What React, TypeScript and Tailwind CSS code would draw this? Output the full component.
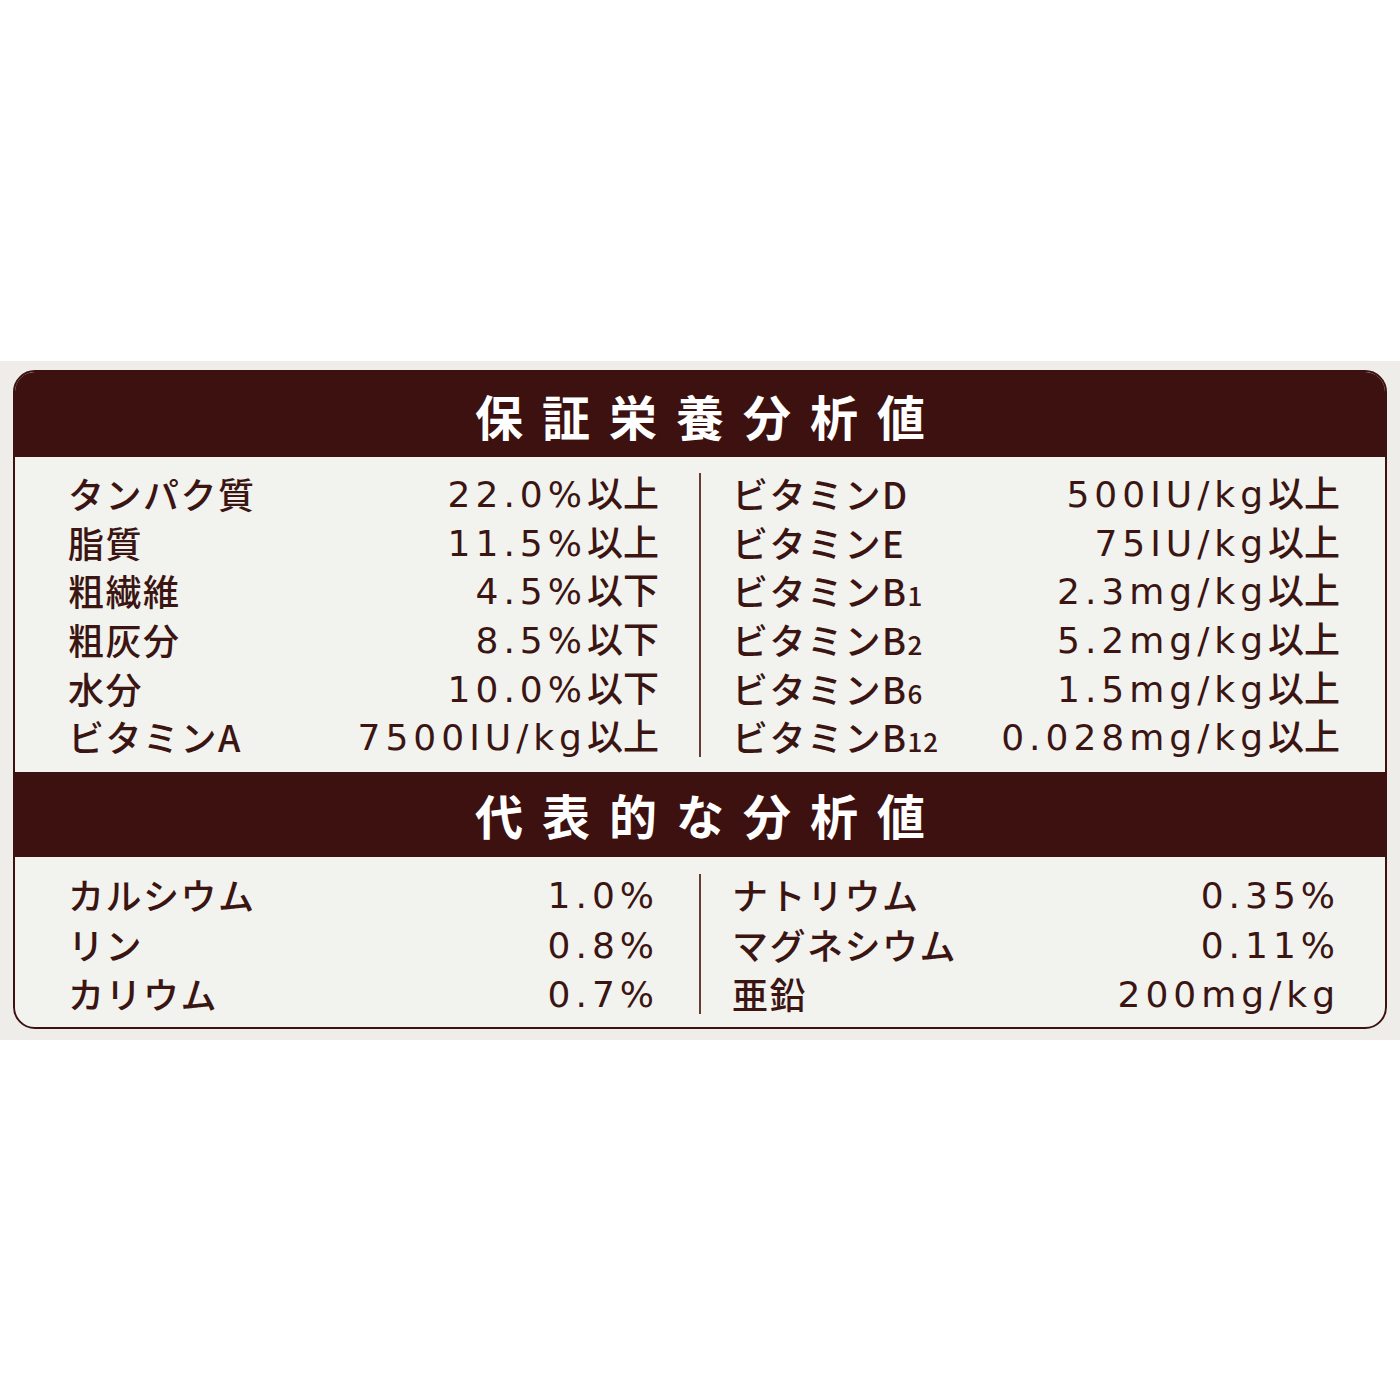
import React from 'react';

type Item = { label: string; sub?: string; num: string; suffix?: string };

const guaranteedLeft: Item[] = [
  { label: 'タンパク質', num: '22.0%', suffix: '以上' },
  { label: '脂質', num: '11.5%', suffix: '以上' },
  { label: '粗繊維', num: '4.5%', suffix: '以下' },
  { label: '粗灰分', num: '8.5%', suffix: '以下' },
  { label: '水分', num: '10.0%', suffix: '以下' },
  { label: 'ビタミンA', num: '7500IU/kg', suffix: '以上' },
];

const guaranteedRight: Item[] = [
  { label: 'ビタミンD', num: '500IU/kg', suffix: '以上' },
  { label: 'ビタミンE', num: '75IU/kg', suffix: '以上' },
  { label: 'ビタミンB', sub: '1', num: '2.3mg/kg', suffix: '以上' },
  { label: 'ビタミンB', sub: '2', num: '5.2mg/kg', suffix: '以上' },
  { label: 'ビタミンB', sub: '6', num: '1.5mg/kg', suffix: '以上' },
  { label: 'ビタミンB', sub: '12', num: '0.028mg/kg', suffix: '以上' },
];

const typicalLeft: Item[] = [
  { label: 'カルシウム', num: '1.0%' },
  { label: 'リン', num: '0.8%' },
  { label: 'カリウム', num: '0.7%' },
];

const typicalRight: Item[] = [
  { label: 'ナトリウム', num: '0.35%' },
  { label: 'マグネシウム', num: '0.11%' },
  { label: '亜鉛', num: '200mg/kg' },
];

function Row({ item, height }: { item: Item; height: string }) {
  return (
    <div className={`flex items-center justify-between ${height}`}>
      <span className="tracking-[1.5px]">
        {item.label}
        {item.sub && <span className="text-[26px] tracking-[1px]">{item.sub}</span>}
      </span>
      <span className="whitespace-nowrap">
        <span className="font-['DejaVu_Sans',sans-serif] tracking-[5px]">{item.num}</span>
        {item.suffix && <span>{item.suffix}</span>}
      </span>
    </div>
  );
}

function Band({ title }: { title: string }) {
  return (
    <div className="h-[85px] bg-[#3c1110] flex items-center justify-center">
      <h2 className="text-white text-[48px] font-bold tracking-[19px] pl-[19px] leading-none">{title}</h2>
    </div>
  );
}

function Section({
  left,
  right,
  rowH,
  pad,
}: {
  left: Item[];
  right: Item[];
  rowH: string;
  pad: string;
}) {
  return (
    <div className={`grid grid-cols-[1fr_2px_1fr] ${pad}`}>
      <div className="pl-[53px] pr-[40px]">
        {left.map((it) => (
          <Row key={it.label + it.num} item={it} height={rowH} />
        ))}
      </div>
      <div className="py-[4px]">
        <div className="h-full w-[2px] bg-[#6a3a34]" />
      </div>
      <div className="pl-[31px] pr-[45px]">
        {right.map((it) => (
          <Row key={it.label + it.num} item={it} height={rowH} />
        ))}
      </div>
    </div>
  );
}

export default function App() {
  return (
    <div className="w-[1400px] h-[1400px] bg-white pt-[361px] font-['Noto_Sans_CJK_JP',sans-serif]">
      <div className="bg-[#eeede9] px-[13px] pt-[9px] pb-[11px]">
        <div className="border-2 border-[#3c1110] rounded-[22px] overflow-hidden bg-[#f2f2ef] text-[36px] font-medium text-[#3a1512] leading-none">
          <Band title="保証栄養分析値" />
          <Section
            left={guaranteedLeft}
            right={guaranteedRight}
            rowH="h-[48.6px]"
            pad="pt-[12px] pb-[11px]"
          />
          <Band title="代表的な分析値" />
          <Section
            left={typicalLeft}
            right={typicalRight}
            rowH="h-[49.5px]"
            pad="pt-[13px] pb-[9px]"
          />
        </div>
      </div>
    </div>
  );
}
